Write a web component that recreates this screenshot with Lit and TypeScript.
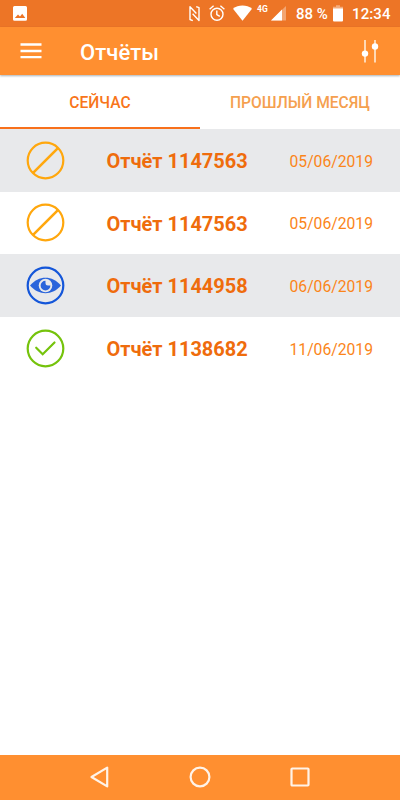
import { LitElement, html, css, svg } from "lit";
import { customElement, property } from "lit/decorators.js";

type Status = "blocked" | "seen" | "done";

interface Report {
  status: Status;
  title: string;
  date: string;
}

const REPORTS: Report[] = [
  { status: "blocked", title: "Отчёт 1147563", date: "05/06/2019" },
  { status: "blocked", title: "Отчёт 1147563", date: "05/06/2019" },
  { status: "seen", title: "Отчёт 1144958", date: "06/06/2019" },
  { status: "done", title: "Отчёт 1138682", date: "11/06/2019" },
];

@customElement("status-bar")
export class StatusBar extends LitElement {
  static styles = css`
    :host {
      display: flex;
      align-items: center;
      height: 27px;
      box-sizing: border-box;
      padding: 0 9px 0 13px;
      background: #ed7526;
      color: #fff;
      font-size: 15px;
      font-weight: 500;
      line-height: 27px;
      white-space: nowrap;
    }
    svg {
      display: block;
      flex: none;
    }
    .spacer {
      flex: 1;
    }
    .nfc {
      margin-right: 9px;
    }
    .alarm {
      margin-right: 8px;
    }
    .wifi {
      margin-right: 5px;
    }
    .net {
      width: 14px;
      font-size: 8.500px;
      font-weight: 700;
      line-height: 9px;
      align-self: flex-start;
      padding-top: 5px;
    }
    .level {
      width: 37px;
      margin-left: 10px;
      padding-top: 2px;
    }
    .clock {
      width: 39px;
      margin-left: 9px;
      padding-top: 2px;
      letter-spacing: 0.1px;
    }
  `;

  render() {
    return html`
      <svg width="14" height="27" viewBox="0 0 14 27">
        <path
          fill="#fff"
          fill-rule="evenodd"
          d="M1.500 6h11A1.500 1.500 0 0 1 14 7.500V19.300a1.500 1.500 0 0 1-1.500 1.500h-11A1.500 1.500 0 0 1 0 19.300V7.500A1.500 1.500 0 0 1 1.500 6zM1.800 18h10.500L9.200 13.800 7 16.600 5 14.400z"
        />
      </svg>
      <div class="spacer"></div>
      <svg class="nfc" width="11" height="27" viewBox="0 0 11 27">
        <path
          fill="none"
          stroke="#fff"
          stroke-width="1.400"
          stroke-linejoin="round"
          d="M3.800 20.600L1 19.500V6.700L7.400 13.400M7.200 6.600L10 7.700V20.500L3.600 13.800"
        />
      </svg>
      <svg class="alarm" width="16" height="27" viewBox="0 0 16 27">
        <g fill="none" stroke="#fff" stroke-width="1.400">
          <circle cx="8" cy="14.200" r="6" />
          <path d="M.6 9.200L4.600 5.800M15.400 9.200L11.400 5.800M7.800 10.600V14.500L10.800 16.400" />
        </g>
      </svg>
      <svg class="wifi" width="19" height="27" viewBox="0 0 19 27">
        <path fill="#fff" d="M9.500 20.700L0 8.700C5.200 4.400 13.800 4.400 19 8.700z" />
      </svg>
      <span class="net">4G</span>
      <svg width="15" height="27" viewBox="0 0 15 27">
        <path fill="#fff" fill-opacity=".35" d="M15 6V20.600H0z" />
        <path fill="#fff" d="M11 9.500V20.600H0z" />
      </svg>
      <span class="level">88 %</span>
      <svg width="10" height="27" viewBox="0 0 10 27">
        <path fill="#fff" fill-opacity=".4" d="M3 5.200h4v1.600h3V9H0V6.800h3z" />
        <path fill="#fff" d="M0 8.500h10V20.500a1 1 0 0 1-1 1H1a1 1 0 0 1-1-1z" />
      </svg>
      <span class="clock">12:34</span>
    `;
  }
}

@customElement("status-icon")
export class StatusIcon extends LitElement {
  @property() status: Status = "blocked";

  static styles = css`
    :host,
    svg {
      display: block;
    }
  `;

  private glyph() {
    switch (this.status) {
      case "blocked":
        return svg`<g fill="none" stroke="#ffa70d" stroke-width="2.200">
          <circle cx="19" cy="19" r="17.800" />
          <path stroke-width="2.600" d="M6.600 31.400L31.400 6.600" />
        </g>`;
      case "seen":
        return svg`<circle cx="19" cy="19" r="17.800" fill="none" stroke="#1456d9" stroke-width="2.200" />
          <path fill="#2a64db" d="M3.500 19C12 8.600 26 8.600 34.500 19C26 29.200 12 29.200 3.500 19z" />
          <circle cx="19" cy="19" r="6.800" fill="#e8e9eb" />
          <path fill="#2a64db" d="M19 14.200A4.900 4.900 0 1 0 23.900 19.100H21.500A2.500 2.500 0 0 1 19 16.600z" />
        `;
      case "done":
        return svg`<g fill="none" stroke="#75c30c" stroke-width="2.200">
          <circle cx="19" cy="19" r="17.800" />
          <path stroke-linecap="round" d="M9.700 18.200L16.200 24.700L28 13" />
        </g>`;
    }
  }

  render() {
    return html`<svg width="39" height="39" viewBox="-0.500 -0.500 39 39">${this.glyph()}</svg>`;
  }
}

@customElement("app-root")
export class AppRoot extends LitElement {
  static styles = css`
    :host {
      display: flex;
      flex-direction: column;
      height: 800px;
      background: #fff;
      font-family: Roboto, sans-serif;
      overflow: hidden;
    }
    svg {
      display: block;
    }
    .appbar {
      display: flex;
      align-items: center;
      height: 48px;
      flex: none;
      box-sizing: border-box;
      padding: 0 20px;
      background: #ff8f30;
      color: #fff;
      box-shadow: 0 1px 2px rgba(40, 60, 70, 0.4);
      z-index: 1;
    }
    .title {
      flex: 1;
      margin: 2px 0 0 38px;
      font-size: 22px;
      font-weight: 500;
      letter-spacing: 0.1px;
    }
    .tabs {
      display: grid;
      grid-template-columns: 1fr 1fr;
      height: 54px;
      flex: none;
    }
    .tab {
      box-sizing: border-box;
      height: 54px;
      border-bottom: 2px solid transparent;
      padding-top: 4px;
      text-align: center;
      font-size: 15.600px;
      line-height: 48px;
      color: #f5a04f;
      font-weight: 500;
    }
    .tab.active {
      border-color: #f8701b;
      color: #f8751a;
    }
    .list {
      flex: 1;
    }
    .row {
      display: grid;
      grid-template-columns: 80.500px 183px 1fr;
      align-items: center;
      height: 62.600px;
      box-sizing: border-box;
      padding-left: 26px;
      color: #ef6c0c;
    }
    .row:nth-child(odd) {
      background: #e8e9eb;
    }
    .name {
      font-size: 20px;
      font-weight: 700;
      padding-top: 2px;
    }
    .date {
      font-size: 15.700px;
      color: #fb8519;
      padding-top: 2px;
    }
    .nav {
      display: flex;
      justify-content: center;
      gap: 78px;
      align-items: center;
      height: 45.500px;
      flex: none;
      background: #ff8f30;
    }
  `;

  render() {
    return html`
      <status-bar></status-bar>
      <header class="appbar">
        <svg width="22" height="48" viewBox="0 0 22 48">
          <path stroke="#fff" stroke-width="2.300" d="M.5 17.500h21M.5 24h21M.5 30.200h21" />
        </svg>
        <span class="title">Отчёты</span>
        <svg width="20" height="48" viewBox="0 0 20 48">
          <path stroke="#ffd9b5" stroke-width="2" d="M5 13v22.500M15 13v22.500" />
          <circle cx="5" cy="26.600" r="3.200" fill="#fff" />
          <circle cx="15" cy="19.500" r="3.200" fill="#fff" />
        </svg>
      </header>
      <nav class="tabs">
        <div class="tab active">СЕЙЧАС</div>
        <div class="tab">ПРОШЛЫЙ МЕСЯЦ</div>
      </nav>
      <main class="list">
        ${REPORTS.map(
          (r) => html`<div class="row">
            <status-icon .status=${r.status}></status-icon>
            <span class="name">${r.title}</span>
            <span class="date">${r.date}</span>
          </div>`
        )}
      </main>
      <footer class="nav">
        <svg width="22" height="24" viewBox="0 0 22 24">
          <path fill="none" stroke="#fff3e8" stroke-width="2.200" stroke-linejoin="round" d="M2.500 12L18.200 2.600V21.400z" />
        </svg>
        <svg width="22" height="24" viewBox="0 0 22 24">
          <circle cx="11" cy="12" r="9.400" fill="none" stroke="#fff3e8" stroke-width="2.200" />
        </svg>
        <svg width="22" height="24" viewBox="0 0 22 24">
          <rect x="2.500" y="3.500" width="17" height="17" rx=".7" fill="none" stroke="#fff3e8" stroke-width="2.200" />
        </svg>
      </footer>
    `;
  }
}
